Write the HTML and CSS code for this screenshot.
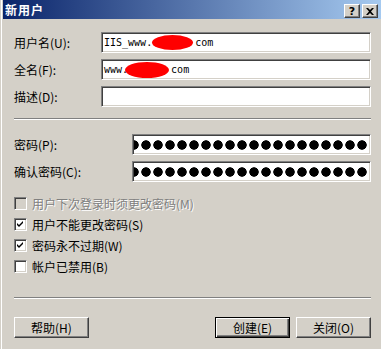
FILE: index.html
```html
<!DOCTYPE html>
<html lang="zh-CN">
<head>
  <meta charset="UTF-8">
  <title>新用户</title>
  <link rel="stylesheet" href="styles.css">
</head>
<body>
  <div class="window">
    <div class="titlebar">
      <span class="title">新用户</span>
      <div class="caption-buttons">
        <div class="caption-btn help">?</div>
        <div class="caption-btn">
          <svg width="8" height="7" viewBox="0 0 8 7">
            <path d="M0 0h2l2 2 2-2h2L5 3.5 8 7H6L4 5 2 7H0l3-3.5z" fill="#000"/>
          </svg>
        </div>
      </div>
    </div>

    <div class="content">
      <div class="group">
        <div class="field-row">
          <span class="label">用户名(U):</span>
          <div class="textbox">IIS_www.<span class="redact redact-user"></span>com</div>
        </div>
        <div class="field-row">
          <span class="label">全名(F):</span>
          <div class="textbox">www.<span class="redact redact-name"></span>com</div>
        </div>
        <div class="field-row">
          <span class="label">描述(D):</span>
          <div class="textbox"></div>
        </div>
      </div>

      <div class="separator sep-top"></div>

      <div class="group">
        <div class="field-row">
          <span class="label label-wide">密码(P):</span>
          <div class="textbox password" aria-label="密码"></div>
        </div>
        <div class="field-row">
          <span class="label label-wide">确认密码(C):</span>
          <div class="textbox password" aria-label="确认密码"></div>
        </div>
      </div>

      <div class="checks">
        <div class="check-row disabled">
          <span class="checkbox"></span>
          <span>用户下次登录时须更改密码(M)</span>
        </div>
        <div class="check-row">
          <span class="checkbox">
            <svg width="9" height="9" viewBox="0 0 9 9"><path d="M1 3l2 2 4-4v2l-4 4-2-2z" fill="#000"/></svg>
          </span>
          <span>用户不能更改密码(S)</span>
        </div>
        <div class="check-row">
          <span class="checkbox">
            <svg width="9" height="9" viewBox="0 0 9 9"><path d="M1 3l2 2 4-4v2l-4 4-2-2z" fill="#000"/></svg>
          </span>
          <span>密码永不过期(W)</span>
        </div>
        <div class="check-row">
          <span class="checkbox"></span>
          <span>帐户已禁用(B)</span>
        </div>
      </div>

      <div class="separator sep-bottom"></div>

      <div class="button-row">
        <button class="btn">帮助(H)</button>
        <div class="button-group">
          <button class="btn btn-default">创建(E)</button>
          <button class="btn">关闭(O)</button>
        </div>
      </div>
    </div>
  </div>
</body>
</html>
```

FILE: styles.css
```css
:root {
  --face: #d4d0c8;
  --shadow: #808080;
  --dark: #404040;
  --light: #ffffff;
}

body {
  margin: 0;
  background-color: var(--face);
  font-family: "Noto Sans CJK SC", sans-serif;
  font-size: 12px;
  color: #000;
}

.window {
  margin-left: 1px;
  border-left: 1px solid var(--light);
  height: 349px;
}

/* title bar */
.titlebar {
  margin-left: 1px;
  height: 19px;
  display: flex;
  justify-content: space-between;
  padding: 0 3px 0 2px;
  background: linear-gradient(to right, #0a246a, #a6caf0);
}

.title {
  color: #fff;
  font-weight: bold;
  letter-spacing: 1px;
  line-height: 19px;
}

.caption-buttons {
  display: flex;
  gap: 2px;
  margin-top: 4px;
}

.caption-btn {
  width: 16px;
  height: 14px;
  box-sizing: border-box;
  display: flex;
  align-items: center;
  justify-content: center;
  background-color: var(--face);
  border: 1px solid;
  border-color: var(--light) var(--dark) var(--dark) var(--light);
  box-shadow: inset -1px -1px var(--shadow);
}

.caption-btn.help {
  font-family: "DejaVu Sans", sans-serif;
  font-weight: bold;
  font-size: 11px;
  line-height: 1;
}

/* body */
.content {
  padding: 13px 10px 0 12px;
}

.group {
  display: flex;
  flex-direction: column;
  gap: 6px;
}

.field-row {
  display: flex;
  align-items: center;
  height: 21px;
}

.label {
  width: 87px;
  flex-shrink: 0;
}

.label-wide {
  width: 118px;
}

.textbox {
  flex: 1;
  height: 21px;
  box-sizing: border-box;
  display: flex;
  align-items: center;
  padding-left: 2px;
  background-color: #fff;
  border: 1px solid;
  border-color: var(--shadow) var(--light) var(--light) var(--shadow);
  box-shadow: inset 1px 1px var(--dark), inset -1px -1px var(--face);
  font-family: "DejaVu Sans Mono", monospace;
  font-size: 10px;
  white-space: pre;
}

.redact {
  display: inline-block;
  background-color: #ff0000;
  border-radius: 50%;
}

.redact-user {
  width: 41px;
  height: 15px;
  margin-right: 2px;
}

.redact-name {
  width: 44px;
  height: 16px;
  margin-left: -3px;
  margin-right: 2px;
}

.password {
  background-image: radial-gradient(circle 5px at center, #000 4.4px, transparent 5px);
  background-size: 12px 10px;
  background-repeat: repeat-x;
  background-position: right 2px center;
}

.separator {
  border-top: 1px solid var(--shadow);
  border-bottom: 1px solid var(--light);
}

.sep-top {
  margin: 11px 0 14px;
}

.sep-bottom {
  margin: 20px 0 18px;
}

/* check boxes */
.checks {
  margin-top: 11px;
}

.check-row {
  display: flex;
  align-items: center;
  gap: 5px;
  height: 21px;
}

.checkbox {
  width: 13px;
  height: 13px;
  box-sizing: border-box;
  display: flex;
  align-items: center;
  justify-content: center;
  background-color: #fff;
  border: 1px solid;
  border-color: var(--shadow) var(--light) var(--light) var(--shadow);
  box-shadow: inset 1px 1px var(--dark), inset -1px -1px var(--face);
}

.check-row.disabled {
  color: var(--shadow);
  text-shadow: 1px 1px var(--light);
}

.check-row.disabled .checkbox {
  background-color: var(--face);
}

/* buttons */
.button-row {
  display: flex;
  justify-content: space-between;
}

.button-group {
  display: flex;
  gap: 6px;
}

.btn {
  width: 75px;
  height: 21px;
  box-sizing: border-box;
  padding: 0;
  background-color: var(--face);
  border: 1px solid;
  border-color: var(--light) var(--dark) var(--dark) var(--light);
  box-shadow: inset -1px -1px var(--shadow);
  font-family: "Noto Sans CJK SC", sans-serif;
  font-size: 12px;
  color: #000;
}

.btn-default {
  border-color: #000;
  box-shadow: inset 1px 1px var(--light), inset -1px -1px var(--dark), inset -2px -2px var(--shadow);
}
```
